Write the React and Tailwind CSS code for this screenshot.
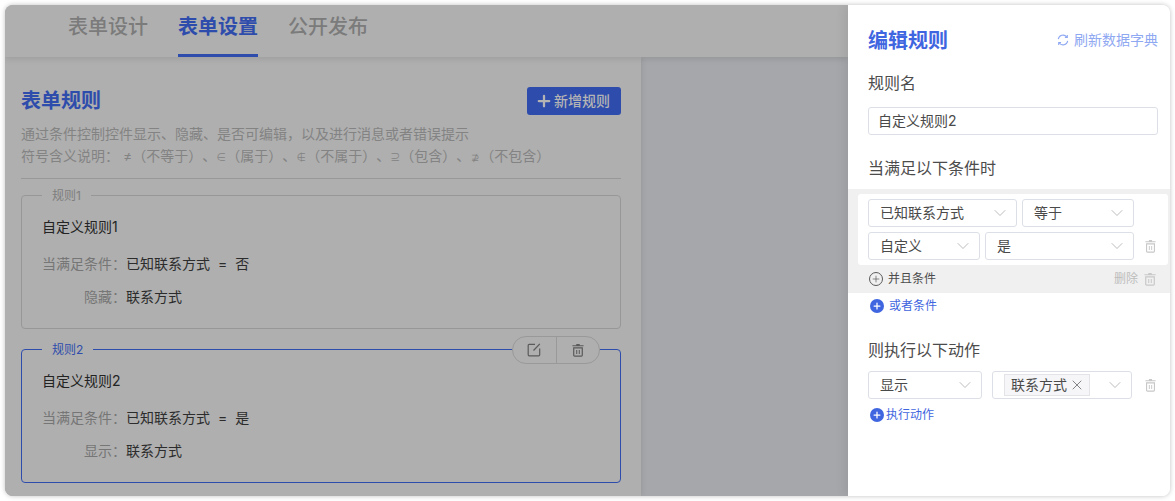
import { Plus, ChevronDown, X } from 'lucide-react'

const FONT = { fontFamily: '"Inter", "Noto Sans CJK SC", sans-serif' }

const TrashIcon = ({ className }) => (
  <svg viewBox="0 0 14 16" fill="none" preserveAspectRatio="none" className={className}>
    <path d="M5 1h4v1.5h4.5v1.3H.5V2.5H5z" fill="currentColor" />
    <path d="M2 5.5h10V14a1 1 0 0 1-1 1H3a1 1 0 0 1-1-1z" stroke="currentColor" strokeWidth="1.4" />
    <path d="M5.5 8v4.5M8.5 8v4.5" stroke="currentColor" strokeWidth="1.2" />
  </svg>
)

const EditIcon = ({ className }) => (
  <svg viewBox="0 0 14 14" fill="none" className={className}>
    <path d="M8 1.3H2.2a1 1 0 0 0-1 1v9.5a1 1 0 0 0 1 1h9.5a1 1 0 0 0 1-1V5.5" stroke="currentColor" strokeWidth="1.2" />
    <path d="M6.5 7.5 12.8.8" stroke="currentColor" strokeWidth="1.2" />
  </svg>
)

const RefreshIcon = ({ className }) => (
  <svg viewBox="0 0 12 12" fill="none" className={className}>
    <path d="M1.3 5.2A4.8 4.8 0 0 1 9.8 3" stroke="currentColor" strokeWidth="1.1" />
    <path d="M10.7 6.8A4.8 4.8 0 0 1 2.2 9" stroke="currentColor" strokeWidth="1.1" />
    <path d="M10.3 1v2.4H7.9M1.7 11V8.6h2.4" stroke="currentColor" strokeWidth="1.1" />
  </svg>
)

const AddDot = () => (
  <span className="flex h-[14px] w-[14px] items-center justify-center rounded-full bg-[#3f66e0]">
    <Plus size={10} strokeWidth={3} className="text-white" />
  </span>
)

// the math signs are narrower than a full CJK cell in the picture
const Sym = ({ children }) => (
  <span className="inline-block w-[10px] text-center text-[10px]">{children}</span>
)

const Select = ({ width, children }) => (
  <div className={`flex h-7 items-center justify-between rounded-[3px] border border-[#dcdfe6] bg-white pr-[6px] pl-[11px] text-sm text-[#4a4a4a] ${width}`}>
    <span>{children}</span>
    <ChevronDown size={20} strokeWidth={1} className="text-[#b0b0b0]" />
  </div>
)

const RuleCard = ({ legend, name, cond, actionLabel, active, children }) => (
  <div className="relative">
    <fieldset className={`h-[143px] rounded-[4px] border px-5 ${active ? 'border-[#2e4cab]' : 'border-[#979797]'}`}>
      <legend className={`px-[10px] pt-[2px] text-xs leading-4 ${active ? 'text-[#2e4cab]' : 'text-[#7e7e7e]'}`}>{legend}</legend>
      <p className="mt-[12px] text-sm leading-[22px] text-[#232323]">{name}</p>
      <div className="mt-[15px] flex text-sm leading-[22px]">
        <span className="w-[84px] text-right text-[#767676]">当满足条件：</span>
        <span className="text-[#2c2c2c]">
          已知联系方式<span className="mx-2">=</span>{cond}
        </span>
      </div>
      <div className="mt-[11px] flex text-sm leading-[22px]">
        <span className="w-[84px] text-right text-[#767676]">{actionLabel}：</span>
        <span className="text-[#2c2c2c]">联系方式</span>
      </div>
    </fieldset>
    {children}
  </div>
)

export default function App() {
  return (
    <div style={FONT} className="h-[501px] w-[1175px] overflow-hidden bg-white p-[5px] [text-spacing-trim:space-all]">
      <div className="flex h-[491px] overflow-hidden rounded-lg shadow-[0_0_5px_rgba(0,0,0,0.25)]">
        {/* dimmed page behind the drawer */}
        <div className="flex min-w-0 flex-1 flex-col bg-[#a6a7aa]">
          <div className="relative z-10 flex h-[52px] shrink-0 gap-[30px] bg-[#afafaf] pl-[63px] text-xl shadow-[0_2px_6px_rgba(0,0,0,0.1)]">
            <span className="pt-2 font-medium text-[#7b7b7b]">表单设计</span>
            <span className="border-b-[3px] border-[#2e4cab] pt-2 font-semibold text-[#2e4cab]">表单设置</span>
            <span className="pt-2 font-medium text-[#7b7b7b]">公开发布</span>
          </div>

          <div className="flex-1 overflow-hidden">
            <div className="h-full w-[636px] bg-[#afafaf] pt-[30px] pr-5 pl-4 shadow-[0_0_6px_rgba(0,0,0,0.12)]">
              <div className="flex items-center justify-between">
                <h2 className="text-xl leading-7 font-semibold text-[#2e4cab]">表单规则</h2>
                <button className="flex h-7 w-[94px] items-center gap-px rounded-[3px] bg-[#2e4cab] pl-2 text-sm font-medium text-[#b4b4b4]">
                  <Plus size={18} strokeWidth={3} />
                  新增规则
                </button>
              </div>
              <p className="mt-2 text-sm leading-[22px] text-[#838383]">
                通过条件控制控件显示、隐藏、是否可编辑，以及进行消息或者错误提示
                <br />
                符号含义说明： ≠（不等于）、<Sym>∈</Sym>（属于）、<Sym>∉</Sym>（不属于）、<Sym>⊇</Sym>（包含）、<Sym>⊉</Sym>（不包含）
              </p>
              <div className="mt-[10px] border-t border-[#989898]" />
              <div className="mt-[7px] flex flex-col gap-[11px]">
                <RuleCard legend="规则1" name="自定义规则1" cond="否" actionLabel="隐藏" />
                <RuleCard legend="规则2" name="自定义规则2" cond="是" actionLabel="显示" active>
                  <div className="absolute top-[-4px] right-[21px] flex h-7 w-[88px] items-center rounded-full border border-[#999999] bg-[#afafaf] text-[#5a5a5a]">
                    <span className="flex h-full flex-1 items-center justify-center border-r border-[#999999]">
                      <EditIcon className="h-[14px] w-[14px]" />
                    </span>
                    <span className="flex h-full flex-1 items-center justify-center">
                      <TrashIcon className="h-[14px] w-[12px]" />
                    </span>
                  </div>
                </RuleCard>
              </div>
            </div>
          </div>
        </div>

        {/* edit drawer */}
        <div className="relative z-10 w-[322px] shrink-0 bg-white shadow-[-3px_0_10px_rgba(0,0,0,0.08)]">
          <div className="flex items-center justify-between pt-[21px] pr-3 pl-5">
            <h2 className="text-xl leading-7 font-semibold text-[#3f66e0]">编辑规则</h2>
            <span className="flex items-center gap-[5px] pb-[2px] text-sm leading-7 text-[#8fa8f2]">
              <RefreshIcon className="h-3 w-3" />
              刷新数据字典
            </span>
          </div>

          <div className="px-5 pr-3">
            <p className="mt-[15px] text-base leading-6 text-[#4c4c4c]">规则名</p>
            <div className="mt-[12px] flex h-7 items-center rounded-[3px] border border-[#dcdfe6] px-[9px] text-sm text-[#4a4a4a]">
              自定义规则2
            </div>
            <p className="mt-[21px] text-base leading-6 text-[#4c4c4c]">当满足以下条件时</p>
          </div>

          <div className="mt-[9px] bg-[#f0f0f0] pt-[5px] pr-[2px] pl-[10px]">
            <div className="rounded-[3px] bg-white py-[5px] pl-[10px]">
              <div className="flex gap-[5px]">
                <Select width="w-[149px]">已知联系方式</Select>
                <Select width="w-[112px]">等于</Select>
              </div>
              <div className="mt-[5px] flex items-center gap-[5px]">
                <Select width="w-[112px]">自定义</Select>
                <Select width="w-[149px]">是</Select>
                <TrashIcon className="ml-[6px] h-[14px] w-[11px] text-[#c8c8c8]" />
              </div>
            </div>
            <div className="flex h-[28px] items-center pr-[12px] pl-[11px] text-xs text-[#4c4c4c]">
              <span className="mr-[5px] flex h-[14px] w-[14px] items-center justify-center rounded-full border border-[#5a5a5a]">
                <Plus size={10} strokeWidth={1.5} />
              </span>
              <span>并且条件</span>
              <span className="mr-[6px] ml-auto text-[#bdbdbd]">删除</span>
              <TrashIcon className="h-[14px] w-[12px] text-[#c8c8c8]" />
            </div>
          </div>

          <div className="px-5 pr-3">
            <div className="mt-[5px] flex h-[16px] items-center gap-[5px] pl-[2px] text-xs text-[#3f66e0]">
              <AddDot />
              或者条件
            </div>
            <p className="mt-[24px] text-base leading-6 text-[#4c4c4c]">则执行以下动作</p>
            <div className="mt-[9px] flex items-center">
              <Select width="w-[114px]">显示</Select>
              <div className="ml-[10px] flex h-7 w-[140px] items-center justify-between rounded-[3px] border border-[#dcdfe6] pr-[6px] pl-[11px] text-sm text-[#4a4a4a]">
                <span className="flex h-[22px] w-[86px] items-center gap-[2px] border border-[#e4e4e8] bg-[#f6f6f8] pl-[6px]">
                  联系方式
                  <X size={16} strokeWidth={1} />
                </span>
                <ChevronDown size={20} strokeWidth={1} className="text-[#b0b0b0]" />
              </div>
              <TrashIcon className="ml-[13px] h-[14px] w-[11px] text-[#c8c8c8]" />
            </div>
            <div className="mt-[8px] flex h-[16px] items-center gap-[2px] pl-[2px] text-xs text-[#3f66e0]">
              <AddDot />
              执行动作
            </div>
          </div>
        </div>
      </div>
    </div>
  )
}
